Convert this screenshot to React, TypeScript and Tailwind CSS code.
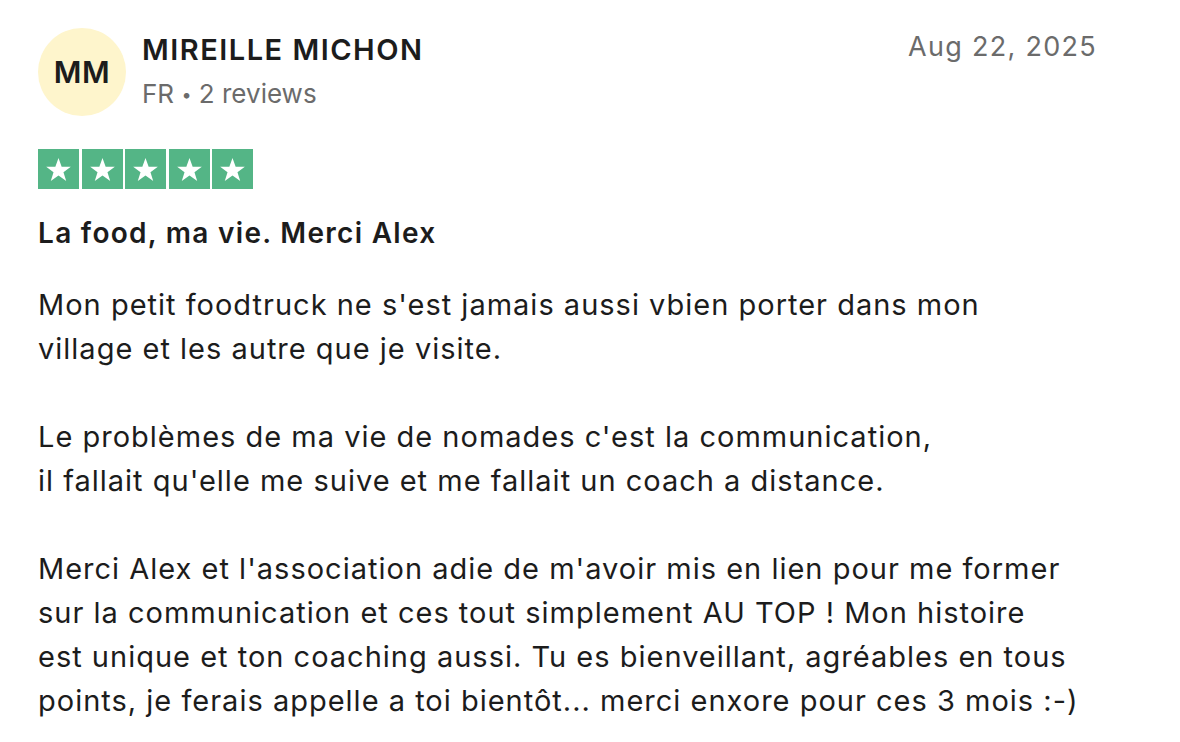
import React from "react";

const Star = () => (
  <div className="w-[41px] h-[40px] bg-[#54b586] flex items-center justify-center">
    <svg viewBox="0 0 24 24" className="w-[29px] h-[29px]" fill="white">
      <path d="M12 2.5l2.6 7.2h7.6l-6.1 4.5 2.3 7.3L12 17l-6.4 4.5 2.3-7.3-6.1-4.5h7.6z" />
    </svg>
  </div>
);

const paragraphs = [
  [
    "Mon petit foodtruck ne s'est jamais aussi vbien porter dans mon",
    "village et les autre que je visite.",
  ],
  [
    "Le problèmes de ma vie de nomades c'est la communication,",
    "il fallait qu'elle me suive et me fallait un coach a distance.",
  ],
  [
    "Merci Alex et l'association adie de m'avoir mis en lien pour me former",
    "sur la communication et ces tout simplement AU TOP ! Mon histoire",
    "est unique et ton coaching aussi. Tu es bienveillant, agréables en tous",
    "points, je ferais appelle a toi bientôt... merci enxore pour ces 3 mois :-)",
  ],
];

export default function App() {
  return (
    <div
      className="w-[1180px] h-[742px] bg-white overflow-hidden pl-[38px] pr-[83px] pt-[28px] text-[#1c1c1c]"
      style={{ fontFamily: "Inter, 'Liberation Sans', sans-serif" }}
    >
      <div className="flex justify-between items-start">
        <div className="flex items-center gap-[16px]">
          <div className="w-[88px] h-[88px] rounded-full bg-[#fef5cc] flex items-center justify-center text-[30px] font-semibold tracking-[0.5px]">
            MM
          </div>
          <div className="flex flex-col">
            <div className="text-[29px] font-semibold leading-[40px] tracking-[1.5px]">MIREILLE MICHON</div>
            <div className="text-[26px] leading-[40px] text-[#6b6b6b] mt-[4px]">
              FR <span className="text-[18px] align-[2px]">•</span> 2 reviews
            </div>
          </div>
        </div>
        <div className="text-[27px] leading-[40px] text-[#6b6b6b] mt-[-1px] tracking-[1.3px]">Aug 22, 2025</div>
      </div>

      <div className="flex gap-[2.5px] mt-[33px]">
        <Star />
        <Star />
        <Star />
        <Star />
        <Star />
      </div>

      <div className="text-[28px] font-semibold leading-[44px] mt-[22px] tracking-[1.3px]">La food, ma vie. Merci Alex</div>

      <div className="mt-[28px] text-[29px] leading-[44px] tracking-[1px] flex flex-col gap-[44px]">
        {paragraphs.map((p, i) => (
          <div key={i}>
            {p.map((line, j) => (
              <div key={j} className="whitespace-nowrap">{line}</div>
            ))}
          </div>
        ))}
      </div>
    </div>
  );
}
